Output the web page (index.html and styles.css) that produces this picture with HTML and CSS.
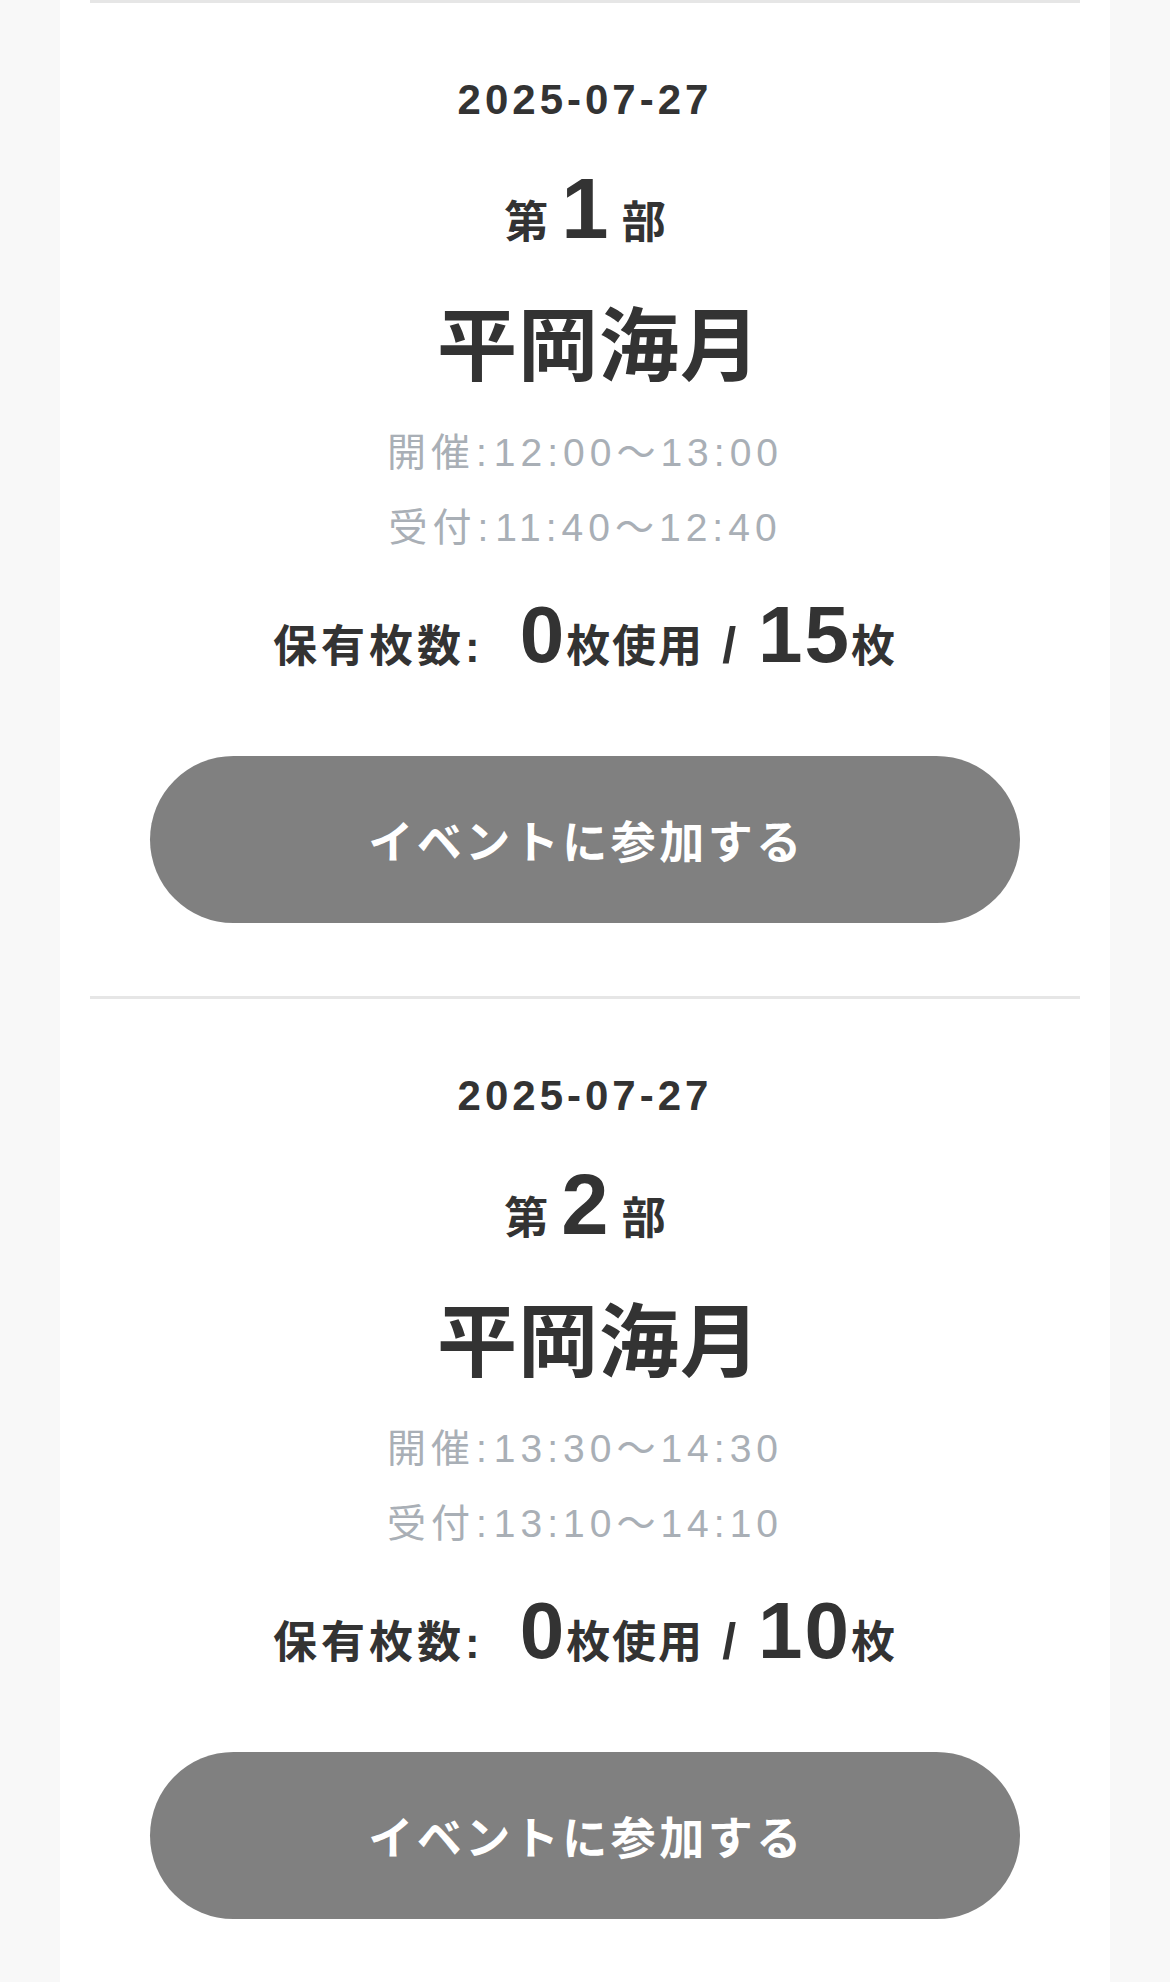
FILE: index.html
```html
<!DOCTYPE html>
<html lang="ja">
<head>
    <meta charset="UTF-8">
    <meta name="viewport" content="width=device-width, initial-scale=1.0">
    <title>イベント一覧</title>
    <link rel="stylesheet" href="styles.css">
</head>
<body>
    <div class="card">
        <div class="session">
            <div class="session-date">2025-07-27</div>
            <div class="session-part">
                <span>第</span><span class="part-num">1</span><span>部</span>
            </div>
            <div class="session-name">平岡海月</div>
            <div class="session-times">
                <p>開催<span class="colon">:</span>12:00〜13:00</p>
                <p>受付<span class="colon">:</span>11:40〜12:40</p>
            </div>
            <div class="session-count">
                <span class="count-label">保有枚数:</span>
                <span class="count-num used">0</span>
                <span class="count-unit">枚使用</span>
                <span class="count-sep">/</span>
                <span class="count-num">15</span>
                <span class="count-unit">枚</span>
            </div>
            <button class="join-btn">イベントに参加する</button>
        </div>

        <div class="session">
            <div class="session-date">2025-07-27</div>
            <div class="session-part">
                <span>第</span><span class="part-num">2</span><span>部</span>
            </div>
            <div class="session-name">平岡海月</div>
            <div class="session-times">
                <p>開催<span class="colon">:</span>13:30〜14:30</p>
                <p>受付<span class="colon">:</span>13:10〜14:10</p>
            </div>
            <div class="session-count">
                <span class="count-label">保有枚数:</span>
                <span class="count-num used">0</span>
                <span class="count-unit">枚使用</span>
                <span class="count-sep">/</span>
                <span class="count-num">10</span>
                <span class="count-unit">枚</span>
            </div>
            <button class="join-btn">イベントに参加する</button>
        </div>
    </div>
</body>
</html>
```

FILE: styles.css
```css
/* Reset */
* {
    margin: 0;
    padding: 0;
    box-sizing: border-box;
}

body {
    font-family: 'Liberation Sans', 'Noto Sans CJK JP', sans-serif;
    background-color: #f8f8f8;
    color: #333333;
}

.card {
    margin: 0 60px;
    min-height: 100vh;
    background-color: #ffffff;
    padding-bottom: 40px;
}

/* Session block */
.session {
    margin: 0 30px;
    padding: 72px 0 73px;
    border-top: 3px solid #e6e6e6;
    display: flex;
    flex-direction: column;
    align-items: center;
    text-align: center;
}

.session-date {
    font-size: 42px;
    line-height: 50px;
    font-weight: bold;
    letter-spacing: 4px;
}

.session-part {
    margin-top: 41px;
    display: flex;
    align-items: baseline;
    font-size: 44px;
    line-height: 44px;
    font-weight: bold;
}

.part-num {
    font-size: 85px;
    line-height: 85px;
    margin: 0 13px;
}

.session-name {
    margin-top: 56px;
    padding-left: 28px;
    font-size: 80px;
    line-height: 80px;
    font-weight: bold;
    letter-spacing: 1px;
}

.session-times {
    margin-top: 28px;
    color: #a9afb6;
    font-size: 39px;
    line-height: 75px;
    letter-spacing: 5px;
}

.session-times .colon {
    margin: 0 2px 0 1px;
}

/* Ticket count */
.session-count {
    margin-top: 30px;
    display: flex;
    align-items: baseline;
    font-weight: bold;
    font-size: 44px;
    line-height: 44px;
}

.count-label {
    letter-spacing: 4px;
}

.count-num {
    font-size: 80px;
    line-height: 80px;
    letter-spacing: 2px;
}

.count-num.used {
    margin-left: 36px;
}

.count-unit {
    letter-spacing: 2px;
}

.count-sep {
    font-size: 50px;
    margin: 0 22px 0 18px;
}

/* Button */
.join-btn {
    align-self: stretch;
    margin: 81px 60px 0;
    height: 167px;
    border: none;
    border-radius: 84px;
    background-color: #808080;
    color: #ffffff;
    font-family: inherit;
    font-size: 45px;
    font-weight: bold;
    letter-spacing: 3.5px;
    padding-left: 3px;
    cursor: pointer;
}
```
